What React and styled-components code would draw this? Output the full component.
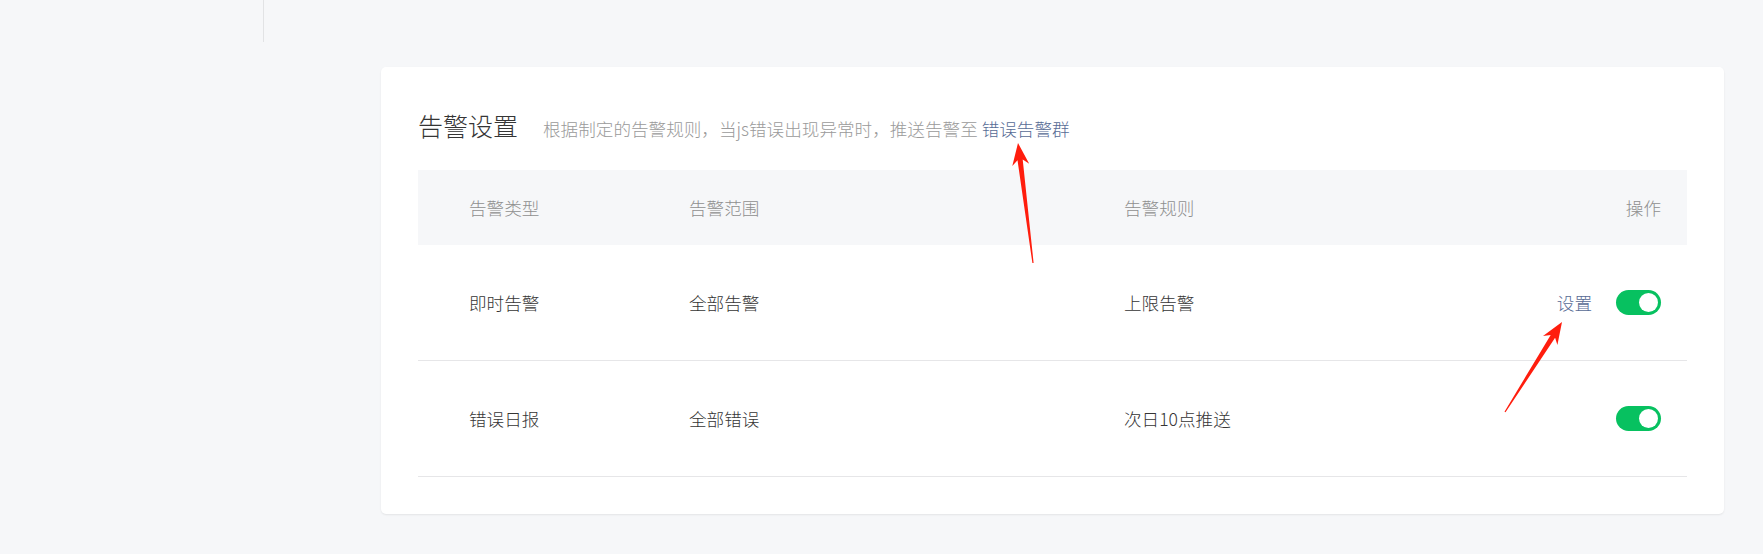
import React from "react";
import styled, { createGlobalStyle } from "styled-components";

const bgColor = "#f6f7f9";
const lineColor = "#e6e6e8";
const linkColor = "#576b95";
const green = "#07c160";

const GlobalStyle = createGlobalStyle`
  html, body {
    margin: 0;
    padding: 0;
    background: ${bgColor};
    font-family: "Noto Sans CJK SC", "Noto Sans", sans-serif;
    font-weight: 300;
  }
`;

const Page = styled.div`
  position: relative;
  width: 1763px;
  min-height: 554px;
  background: ${bgColor};
`;

const TopBar = styled.div`
  display: flex;
  height: 42px;
`;

const SideStub = styled.div`
  width: 263px;
  border-right: 1px solid #e2e3e5;
`;

const Main = styled.main`
  padding: 25px 39px 39px 381px;
`;

const Card = styled.section`
  background: #fff;
  border-radius: 5px;
  box-shadow: 0 1px 2px rgba(0, 0, 0, 0.08);
  padding: 40px 37px 37px;
`;

const Heading = styled.div`
  display: flex;
  align-items: baseline;
  gap: 25px;
  height: 34px;
  margin-bottom: 29px;
  .title {
    font-size: 25px;
    color: #353535;
  }
  .subtitle {
    font-size: 17.6px;
    color: #9a9a9a;
  }
`;

const Link = styled.a`
  color: ${linkColor};
  text-decoration: none;
  cursor: pointer;
`;

const Row = styled.div`
  display: grid;
  grid-template-columns: 220px 435px 1fr auto;
  align-items: center;
  height: ${props => props.header ? "75px" : "115px"};
  padding: 0 26px 0 51px;
  font-size: 17.6px;
  color: ${props => props.header ? "#8f8f8f" : "#353535"};
  background: ${props => props.header ? bgColor : "#fff"};
  border-bottom: ${props => props.header ? "none" : `1px solid ${lineColor}`};
`;

const Ops = styled.div`
  display: flex;
  align-items: center;
  justify-content: flex-end;
  gap: 24px;
`;

const Switch = styled.span`
  position: relative;
  display: inline-block;
  width: 45px;
  height: 25px;
  border-radius: 13px;
  background: ${props => props.checked ? green : "#e0e0e0"};
  &::after {
    content: "";
    position: absolute;
    top: 3px;
    ${props => props.checked ? "right: 3px;" : "left: 3px;"}
    width: 19px;
    height: 19px;
    border-radius: 50%;
    background: #fff;
  }
`;

const Annotations = styled.svg`
  position: absolute;
  left: 0;
  top: 0;
  pointer-events: none;
`;

const rows = [
  { type: "即时告警", scope: "全部告警", rule: "上限告警", setting: true },
  { type: "错误日报", scope: "全部错误", rule: "次日10点推送", setting: false },
];

function arrowPoints([x1, y1], [x2, y2]) {
  const dx = x2 - x1;
  const dy = y2 - y1;
  const len = Math.hypot(dx, dy);
  const ux = dx / len, uy = dy / len;
  const nx = -uy, ny = ux;
  const headLen = 22, headW = 8.5, shaftW = 2.6, tailW = 0.6;
  const bx = x2 - ux * headLen, by = y2 - uy * headLen;
  const sx = x2 - ux * (headLen - 5), sy = y2 - uy * (headLen - 5);
  const p = (x, y) => `${x.toFixed(1)},${y.toFixed(1)}`;
  return [
    p(x1 + nx * tailW, y1 + ny * tailW),
    p(sx + nx * shaftW, sy + ny * shaftW),
    p(bx + nx * headW, by + ny * headW),
    p(x2, y2),
    p(bx - nx * headW, by - ny * headW),
    p(sx - nx * shaftW, sy - ny * shaftW),
    p(x1 - nx * tailW, y1 - ny * tailW),
  ].join(" ");
}

export default function App() {
  return (
    <Page>
      <GlobalStyle />
      <TopBar>
        <SideStub />
      </TopBar>
      <Main>
        <Card>
          <Heading>
            <span className="title">告警设置</span>
            <span className="subtitle">
              根据制定的告警规则，当js错误出现异常时，推送告警至 <Link>错误告警群</Link>
            </span>
          </Heading>
          <Row header>
            <div>告警类型</div>
            <div>告警范围</div>
            <div>告警规则</div>
            <Ops>操作</Ops>
          </Row>
          {rows.map(r => (
            <Row key={r.type}>
              <div>{r.type}</div>
              <div>{r.scope}</div>
              <div>{r.rule}</div>
              <Ops>
                {r.setting && <Link>设置</Link>}
                <Switch checked />
              </Ops>
            </Row>
          ))}
        </Card>
      </Main>
      <Annotations width="1763" height="554">
        <polygon points={arrowPoints([1033, 263], [1018, 143])} fill="#ff1d0d" />
        <polygon points={arrowPoints([1505, 412], [1562, 322])} fill="#ff1d0d" />
      </Annotations>
    </Page>
  );
}
